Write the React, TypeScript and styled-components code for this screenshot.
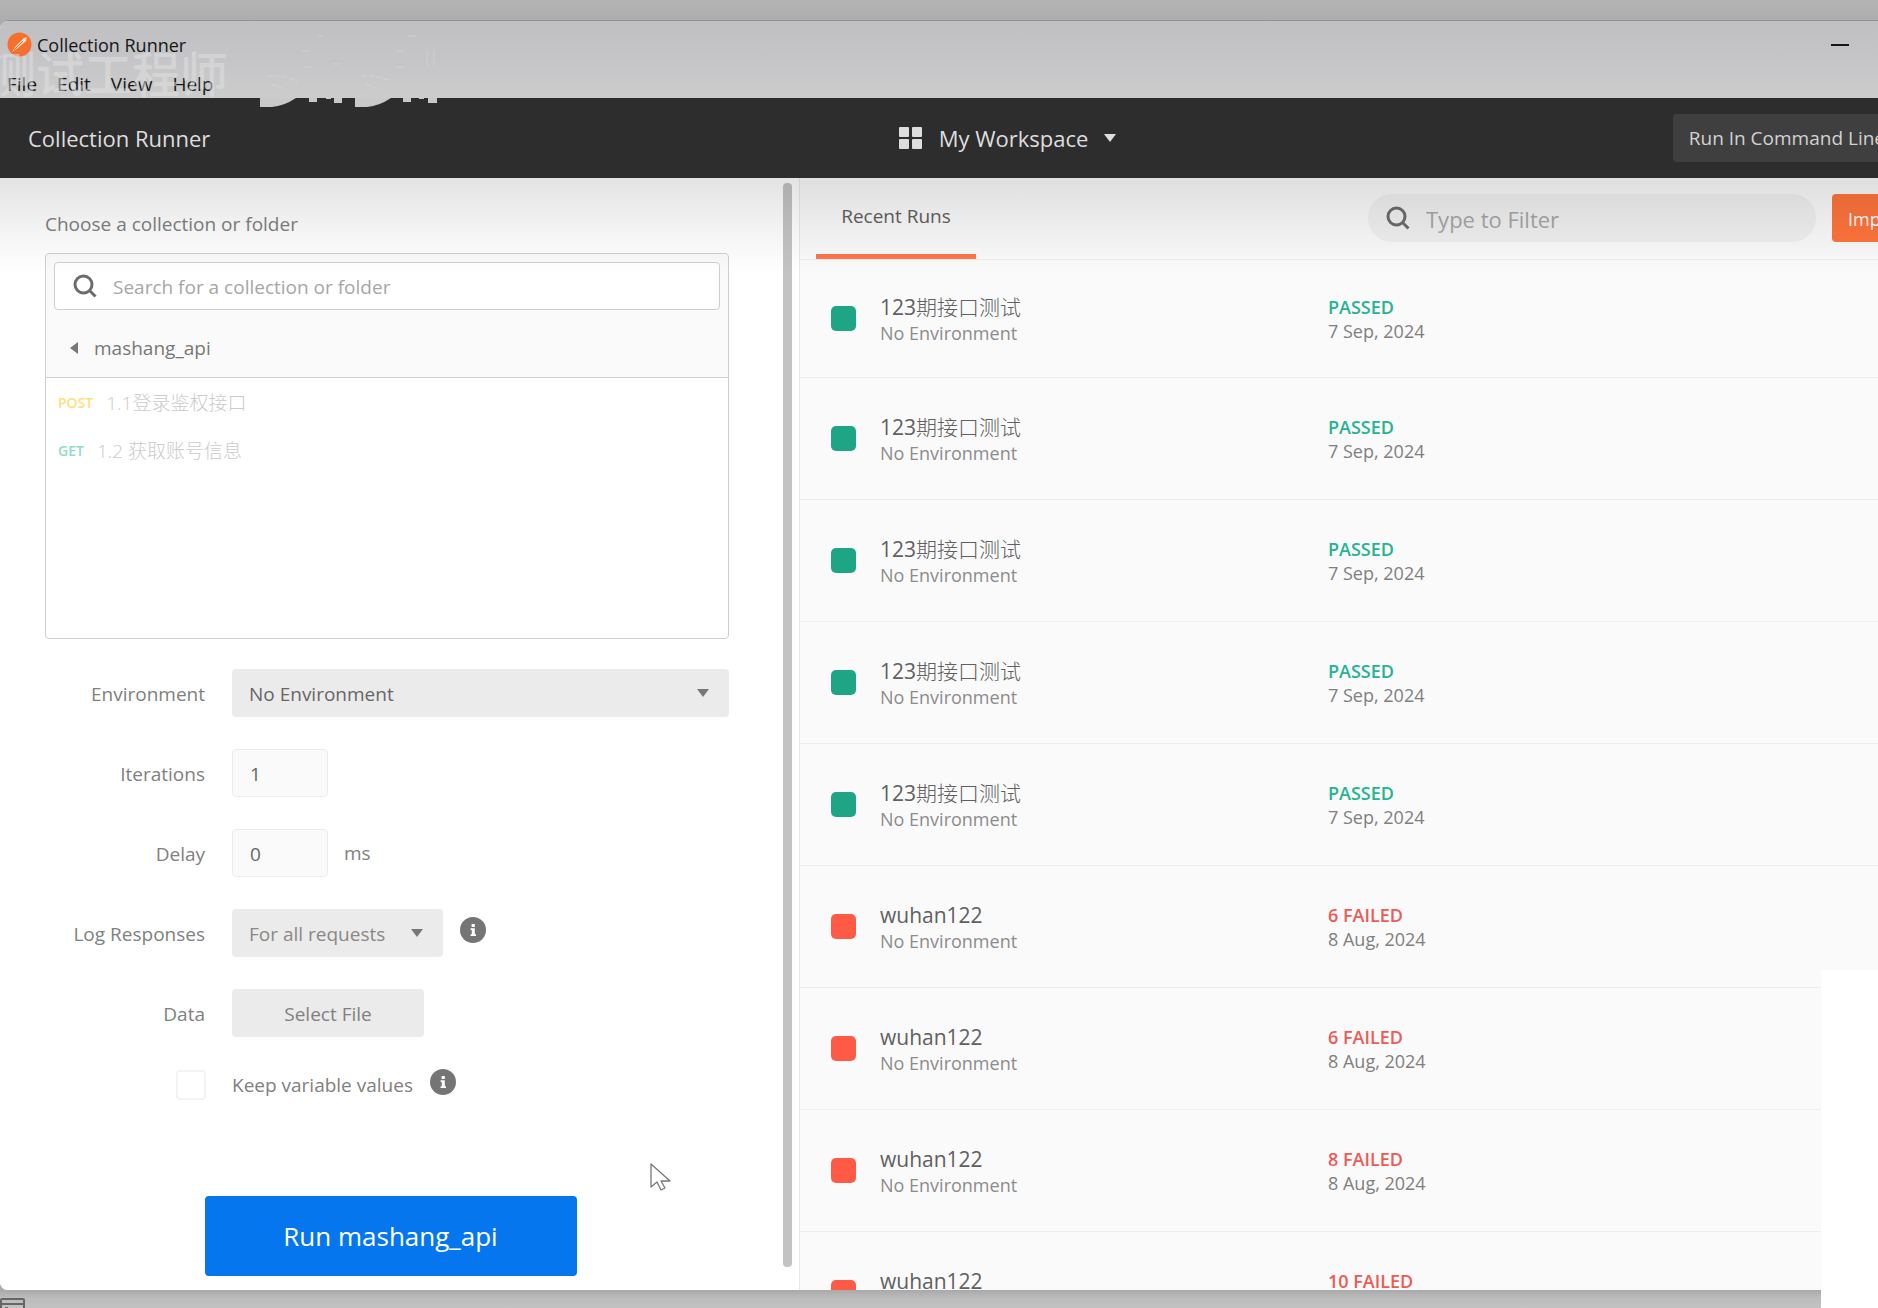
import React from "react";
import styled, { createGlobalStyle, css } from "styled-components";

const Global = createGlobalStyle`
  * { box-sizing: border-box; }
  html, body, #root { height: 100%; }
  body { margin: 0; overflow: hidden; background: #b3b3b3; }
  body, button, input, select {
    font-family: "Open Sans", "Noto Sans CJK SC", sans-serif;
  }
  ul { list-style: none; margin: 0; padding: 0; }
  p, h1, h2 { margin: 0; font-weight: 400; }
`;

const Desktop = styled.div`
  position: relative;
  display: flex;
  flex-direction: column;
  height: 100%;
  overflow: hidden;
  padding-top: 20px;
  background: linear-gradient(#b4b4b4, #adadad 20px);
`;

const AppWindow = styled.div`
  flex: 1;
  min-height: 0;
  width: calc(100% + 138px);
  display: flex;
  flex-direction: column;
  overflow: hidden;
  border-top: 1px solid #929296;
  border-radius: 8px 0 0 8px;
  background: #fff;
`;

const TitleBar = styled.div`
  flex: 0 0 77px;
  display: flex;
  flex-direction: column;
  justify-content: flex-end;
  gap: 13px;
  padding: 0 7px;
  background: linear-gradient(#c0c0c2, #c5c5c8 50%, #cccccc);
  color: #161616;
`;

const TitleRow = styled.div`
  display: flex;
  align-items: center;
  gap: 5px;
  font-size: 18px;
  line-height: 24px;
`;

const Minimize = styled.button`
  margin-left: auto;
  margin-right: 160px;
  width: 18px;
  height: 24px;
  padding: 0;
  border: 0;
  background: none;
  display: flex;
  align-items: center;
  &::after { content: ""; flex: 1; height: 2px; background: #161616; }
`;

const MenuRow = styled.nav`
  display: flex;
  gap: 20px;
`;

const MenuItem = styled.button`
  border: 0;
  padding: 0;
  background: none;
  color: inherit;
  font-size: 19px;
  line-height: 28px;
`;

const Header = styled.header`
  flex: 0 0 80px;
  display: grid;
  grid-template-columns: 1fr auto 1fr;
  align-items: center;
  padding: 0 115px 0 28px;
  background: #2d2d2d;
  color: #dedede;
`;

const HeaderTitle = styled.h1`
  font-size: 22px;
  line-height: 32px;
`;

const Workspace = styled.button`
  display: flex;
  align-items: center;
  gap: 16px;
  margin-left: 86px;
  border: 0;
  background: none;
  color: inherit;
  font-size: 22px;
  line-height: 32px;
`;

const CommandButton = styled.button`
  justify-self: end;
  height: 48px;
  padding: 0 16px;
  border: 0;
  border-radius: 4px;
  background: #3f3f3f;
  color: #d2d2d2;
  font-size: 19px;
  white-space: nowrap;
`;

const Body = styled.main`
  position: relative;
  flex: 1;
  min-height: 0;
  display: flex;
  &::before {
    content: "";
    position: absolute;
    z-index: 2;
    inset: 0 0 auto;
    height: 96px;
    pointer-events: none;
    background: linear-gradient(rgba(0, 0, 0, 0.11), rgba(0, 0, 0, 0.05) 50%, transparent);
  }
`;

const Setup = styled.section`
  flex: 0 0 783px;
  display: flex;
  flex-direction: column;
  background: #fff;
`;

const ScrollTrack = styled.div`
  flex: 0 0 16px;
  padding: 5px 7px 23px 0;
  display: flex;
  background: #fff;
`;

const ScrollThumb = styled.div`
  flex: 1;
  border-radius: 4px;
  background: #c3c3c3;
`;

const SetupForm = styled.form`
  flex: 1;
  display: flex;
  flex-direction: column;
  padding: 32px 54px 14px 45px;
  color: #808080;
  font-size: 19px;
  line-height: 28px;
`;

const Picker = styled.div`
  flex: 0 0 386px;
  display: flex;
  flex-direction: column;
  margin: 15px 0 30px;
  border: 1px solid #cfcfcf;
  border-radius: 4px;
  background: #fff;
`;

const PickerTop = styled.div`
  padding: 8px 8px 0;
  border-bottom: 1px solid #cfcfcf;
  background: #fafafa;
  border-radius: 4px 4px 0 0;
`;

const SearchBox = styled.label`
  height: 48px;
  display: flex;
  align-items: center;
  gap: 16px;
  padding: 0 18px;
  border: 1px solid #cfcfcf;
  border-radius: 4px;
  background: #fff;
  color: #6c6c6c;
`;

const BareInput = styled.input<{ $size: number }>`
  flex: 1;
  min-width: 0;
  border: 0;
  padding: 2px 0 0;
  outline: 0;
  background: none;
  color: #505050;
  font-size: ${(p) => p.$size}px;
  &::placeholder { color: #a6a6a6; opacity: 1; }
`;

const FolderBack = styled.button`
  height: 67px;
  display: flex;
  align-items: center;
  gap: 16px;
  padding: 8px 16px 0;
  border: 0;
  background: none;
  color: #777;
  font-size: 19px;
`;

const RequestRow = styled.li`
  height: 48px;
  display: flex;
  align-items: center;
  gap: 13px;
  padding: 2px 12px 0;
  color: #cbcbcb;
  font-weight: 300;
`;

const Method = styled.span<{ $color: string }>`
  color: ${(p) => p.$color};
  font-size: 14px;
  font-weight: 600;
`;

const Field = styled.div`
  display: flex;
  align-items: center;
  margin-bottom: 32px;
`;

const FieldLabel = styled.label`
  flex: 0 0 160px;
  margin-right: 27px;
  padding-top: 1px;
  text-align: right;
`;

const SelectWrap = styled.span<{ $width?: number }>`
  position: relative;
  ${(p) => (p.$width ? css`flex: 0 0 ${p.$width}px;` : css`flex: 1;`)}
  display: flex;
  svg { position: absolute; right: 20px; top: 20px; pointer-events: none; color: #777; }
`;

const Select = styled.select<{ $strong?: boolean }>`
  appearance: none;
  flex: 1;
  height: 48px;
  padding: 2px 17px 0;
  border: 0;
  border-radius: 4px;
  background: #ebebeb;
  color: ${(p) => (p.$strong ? "#666" : "#888")};
  font-size: 19px;
`;

const NumberInput = styled.input`
  width: 96px;
  height: 48px;
  padding: 2px 17px 0;
  border: 1px solid #ececec;
  border-radius: 4px;
  background: #fafafa;
  color: #666;
  font-size: 19px;
`;

const Unit = styled.span`
  margin-left: 16px;
`;

const FileButton = styled.button`
  width: 192px;
  height: 48px;
  padding: 2px 0 0;
  border: 0;
  border-radius: 4px;
  background: #ebebeb;
  color: #808080;
  font-size: 19px;
`;

const InfoButton = styled.button`
  margin: 0 0 6px 17px;
  padding: 0;
  width: 26px;
  height: 26px;
  border: 0;
  background: none;
  svg { display: block; }
`;

const KeepRow = styled.div`
  display: flex;
  align-items: center;
  height: 48px;
  margin-top: -8px;
  padding-left: 131px;
  label { margin-left: 26px; }
`;

const CheckBox = styled.input`
  appearance: none;
  width: 30px;
  height: 30px;
  margin: 0;
  border: 2px solid #f3f3f3;
  border-radius: 4px;
  background: #fff;
`;

const RunButton = styled.button`
  align-self: center;
  margin: auto 0 0 7px;
  width: 372px;
  height: 80px;
  border: 0;
  border-radius: 4px;
  background: #0676ee;
  color: #fff;
  font-size: 26px;
`;

const Runs = styled.section`
  flex: 1;
  min-width: 0;
  display: flex;
  flex-direction: column;
  border-left: 1px solid #e9e9e9;
  background: #fafafa;
`;

const RunsBar = styled.div`
  flex: 0 0 82px;
  display: flex;
  align-items: center;
  padding: 0 16px;
  border-bottom: 1px solid #eeeeee;
`;

const Tab = styled.button`
  align-self: stretch;
  width: 160px;
  padding: 0;
  border: 0;
  border-bottom: 5px solid #ff7547;
  background: none;
  color: #606060;
  font-size: 19px;
`;

const Filter = styled.label`
  margin-left: auto;
  width: 448px;
  height: 48px;
  display: flex;
  align-items: center;
  gap: 16px;
  padding: 0 18px;
  margin-bottom: 1px;
  border-radius: 24px;
  background: #f0f0f0;
  color: #6c6c6c;
`;

const ImportButton = styled.button`
  width: 168px;
  height: 48px;
  margin: 0 0 1px 16px;
  padding: 2px 16px 0;
  border: 0;
  border-radius: 4px;
  background: #ff743c;
  color: #fff;
  font-size: 18px;
  text-align: left;
`;

const RunList = styled.ul`
  flex: 1;
  min-height: 0;
  overflow: hidden;
`;

const RunRow = styled.li`
  height: 122px;
  display: grid;
  grid-template-columns: 25px 472px 1fr;
  align-items: center;
  padding: 0 31px;
  border-bottom: 1px solid #eeeeee;
  &:first-child { height: 118px; }
`;

const StatusSquare = styled.span<{ $ok: boolean }>`
  height: 25px;
  border-radius: 5px;
  background: ${(p) => (p.$ok ? "#1ea586" : "#ff5a46")};
`;

const RunName = styled.div`
  padding-left: 24px;
  color: #606060;
  font-size: 21px;
  line-height: 28px;
  p + p { color: #8c8c8c; font-size: 18px; line-height: 24px; }
`;

const Han = styled.span`
  font-weight: 300;
`;

const RunResult = styled.div<{ $ok: boolean }>`
  color: #808080;
  font-size: 18px;
  line-height: 24px;
  strong { color: ${(p) => (p.$ok ? "#26b392" : "#ee5a55")}; font-weight: 600; }
`;

const Taskbar = styled.footer`
  flex: 0 0 18px;
  padding-top: 8px;
  overflow: hidden;
  background: linear-gradient(#a8a8a8, #bcbcbc 8px, #c2c2c2);
  svg { display: block; }
`;

const Blank = styled.div`
  position: absolute;
  right: 0;
  bottom: 0;
  width: 57px;
  height: 338px;
  background: #fff;
`;

const Watermark = styled.div`
  position: absolute;
  left: -12px;
  top: 44px;
  color: rgba(226, 226, 226, 0.5);
  font-size: 48px;
  line-height: 60px;
  font-weight: 500;
  white-space: nowrap;
  pointer-events: none;
`;

const WatermarkLogo = styled.svg`
  position: absolute;
  left: 256px;
  top: 30px;
  pointer-events: none;
`;

const Cursor = styled.svg`
  position: absolute;
  left: 648px;
  top: 1161px;
  pointer-events: none;
`;

const SearchIcon = () => (
  <svg width="24" height="24" viewBox="0 0 24 24" fill="none" stroke="currentColor" strokeWidth="3">
    <circle cx="10.5" cy="10.5" r="8.5" />
    <path d="M16.5 16.5 22.5 22.5" />
  </svg>
);

const Caret = () => (
  <svg width="12" height="8" viewBox="0 0 12 8" fill="currentColor"><path d="M0 0h12L6 8z" /></svg>
);

const InfoIcon = () => (
  <svg width="26" height="26" viewBox="0 0 26 26">
    <circle cx="13" cy="13" r="13" fill="#757575" />
    <path d="M11.600 7h3.200v3h-3.200zM10.600 11.300h4.200v6h1.200v1.700h-5.400v-1.700h1.200v-4.200h-1.200z" fill="#fff" />
  </svg>
);

const runs = [
  ...Array.from({ length: 5 }, () => ({ name: "123", han: "期接口测试", ok: true, result: "PASSED", date: "7 Sep, 2024" })),
  ...["6 FAILED", "6 FAILED", "8 FAILED", "10 FAILED"].map((result) => ({
    name: "wuhan122", han: "", ok: false, result, date: "8 Aug, 2024",
  })),
];

export default function App() {
  return (
    <>
      <Global />
      <Desktop>
        <AppWindow>
          <TitleBar>
            <TitleRow>
              <svg width="25" height="25" viewBox="0 0 25 25">
                <circle cx="12.500" cy="12.500" r="12" fill="#f5702f" />
                <path d="M5 20 9 14 17 6l3-1-1 4-8 7z" fill="#fbe3c4" />
                <path d="M7 18 16 9" stroke="#f5702f" strokeWidth="1" />
              </svg>
              <span>Collection Runner</span>
              <Minimize aria-label="Minimize" />
            </TitleRow>
            <MenuRow>
              {["File", "Edit", "View", "Help"].map((m) => <MenuItem key={m}>{m}</MenuItem>)}
            </MenuRow>
          </TitleBar>

          <Header>
            <HeaderTitle>Collection Runner</HeaderTitle>
            <Workspace>
              <svg width="24" height="24" viewBox="0 0 24 24" fill="currentColor">
                <rect x="0" y="1" width="10" height="10" rx="1" />
                <rect x="13" y="1" width="10" height="10" rx="1" />
                <rect x="0" y="13" width="10" height="10" rx="1" />
                <rect x="13" y="13" width="10" height="10" rx="1" />
              </svg>
              <span>My Workspace</span>
              <Caret />
            </Workspace>
            <CommandButton>Run In Command Line</CommandButton>
          </Header>

          <Body>
            <Setup>
              <SetupForm onSubmit={(e) => e.preventDefault()}>
                <label htmlFor="collection-search">Choose a collection or folder</label>
                <Picker>
                  <PickerTop>
                    <SearchBox>
                      <SearchIcon />
                      <BareInput $size={19} id="collection-search" placeholder="Search for a collection or folder" />
                    </SearchBox>
                    <FolderBack type="button">
                      <svg width="8" height="12" viewBox="0 0 8 12" fill="currentColor"><path d="M8 0v12L0 6z" /></svg>
                      mashang_api
                    </FolderBack>
                  </PickerTop>
                  <ul>
                    <RequestRow><Method $color="#ffdf7a">POST</Method>1.1登录鉴权接口</RequestRow>
                    <RequestRow><Method $color="#8fdcc8">GET</Method>1.2 获取账号信息</RequestRow>
                  </ul>
                </Picker>

                <Field>
                  <FieldLabel htmlFor="environment">Environment</FieldLabel>
                  <SelectWrap>
                    <Select id="environment" $strong><option>No Environment</option></Select>
                    <Caret />
                  </SelectWrap>
                </Field>
                <Field>
                  <FieldLabel htmlFor="iterations">Iterations</FieldLabel>
                  <NumberInput id="iterations" defaultValue="1" />
                </Field>
                <Field>
                  <FieldLabel htmlFor="delay">Delay</FieldLabel>
                  <NumberInput id="delay" defaultValue="0" />
                  <Unit>ms</Unit>
                </Field>
                <Field>
                  <FieldLabel htmlFor="log">Log Responses</FieldLabel>
                  <SelectWrap $width={211}>
                    <Select id="log"><option>For all requests</option></Select>
                    <Caret />
                  </SelectWrap>
                  <InfoButton type="button" aria-label="About log responses"><InfoIcon /></InfoButton>
                </Field>
                <Field>
                  <FieldLabel htmlFor="data">Data</FieldLabel>
                  <FileButton id="data" type="button">Select File</FileButton>
                </Field>
                <KeepRow>
                  <CheckBox id="keep" type="checkbox" />
                  <label htmlFor="keep">Keep variable values</label>
                  <InfoButton type="button" aria-label="About variable values"><InfoIcon /></InfoButton>
                </KeepRow>
                <RunButton type="submit">Run mashang_api</RunButton>
              </SetupForm>
            </Setup>
            <ScrollTrack><ScrollThumb /></ScrollTrack>

            <Runs>
              <RunsBar>
                <Tab>Recent Runs</Tab>
                <Filter>
                  <SearchIcon />
                  <BareInput $size={22} aria-label="Filter runs" placeholder="Type to Filter" />
                </Filter>
                <ImportButton>Import Runs</ImportButton>
              </RunsBar>
              <RunList>
                {runs.map((r, i) => (
                  <RunRow key={i}>
                    <StatusSquare $ok={r.ok} />
                    <RunName>
                      <p>{r.name}{r.han && <Han>{r.han}</Han>}</p>
                      <p>No Environment</p>
                    </RunName>
                    <RunResult $ok={r.ok}>
                      <p><strong>{r.result}</strong></p>
                      <p>{r.date}</p>
                    </RunResult>
                  </RunRow>
                ))}
              </RunList>
            </Runs>
          </Body>
        </AppWindow>
        <Taskbar>
          <svg width="26" height="18" viewBox="0 0 26 18" fill="none" stroke="#666" strokeWidth="2">
            <rect x="1" y="1" width="23" height="20" rx="1" />
            <path d="M1 6h23M5 10h3" />
          </svg>
        </Taskbar>
        <Blank />
        <Watermark>测试工程师</Watermark>
        <WatermarkLogo width="190" height="80" viewBox="0 0 190 80">
          <g fill="#c9c9c9">
            <path d="M4 68h36q-12 8-24 9H4z" />
            <path d="M53 68h8v4h-8zM78 68h8v5h-8zM70 68h5v1h-5z" />
            <path d="M99 68h36q-12 8-24 9H99z" />
            <path d="M147 68h8v4h-8zM172 68h9v5h-9zM163 68h5v1h-5z" />
          </g>
          <g fill="none" stroke="#dedede" strokeOpacity="0.5" strokeWidth="1">
            <path d="M46 21h8M47 37h8M62 6h5M76 34h8M140 21h8M141 37h8M152 6h8M171 20v16M178 20v16" />
            <path d="M12 46q18-1 30 6M16 54l12 5M106 46q14-1 25 4M110 54l12 5" strokeDasharray="5 2" />
          </g>
        </WatermarkLogo>
        <Cursor width="28" height="36" viewBox="0 0 28 36">
          <path d="M3 3v23l6-5 4 8 4-2-4-7h9z" fill="#fff" stroke="#777" strokeWidth="1.300" strokeLinejoin="round" />
        </Cursor>
      </Desktop>
    </>
  );
}
